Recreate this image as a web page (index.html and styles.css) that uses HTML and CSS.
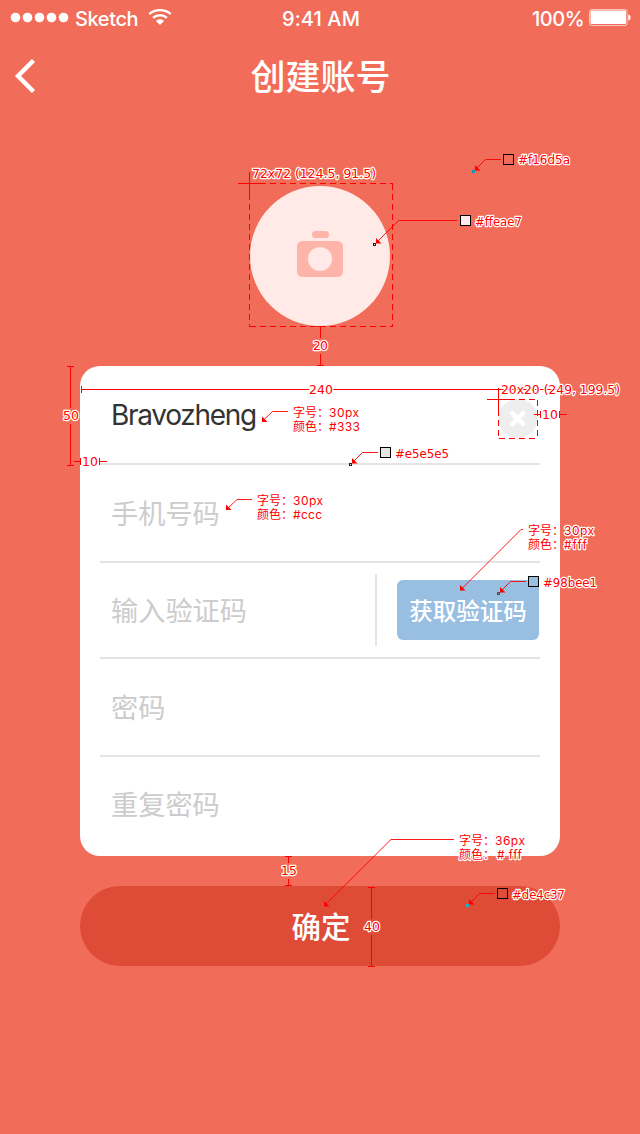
FILE: index.html
```html
<!DOCTYPE html>
<html lang="zh-CN">
<head>
<meta charset="utf-8">
<title>创建账号</title>
<link rel="stylesheet" href="styles.css">
</head>
<body>
<div class="screen">
  <div class="status">
    <div class="carrier">
      <svg width="60" height="12" viewBox="0 0 60 12" fill="#fff"><circle cx="5.5" cy="5.500" r="4.800"/><circle cx="17.500" cy="5.500" r="4.800"/><circle cx="29.500" cy="5.500" r="4.800"/><circle cx="41.500" cy="5.500" r="4.800"/><circle cx="53.500" cy="5.500" r="4.800"/></svg>
      <span class="name">Sketch</span>
      <svg class="wifi" width="24" height="18" viewBox="0 0 24 18" fill="none" stroke="#fff"><path stroke-width="2.4" d="M1.300 5.200C7-.2 17-.2 22.700 5.200M5.100 8.900c3.900-3.600 9.900-3.600 13.800 0"/><path fill="#fff" stroke="none" d="M7.900 12c2.400-2.300 5.800-2.300 8.200 0L12 16z"/></svg>
    </div>
    <span class="time">9:41 AM</span>
    <div class="power">
      <span class="percent">100%</span>
      <svg width="43" height="18" viewBox="0 0 43 18"><rect x=".5" y=".5" width="37.500" height="16" rx="2" fill="none" stroke="#fff" stroke-opacity=".6" stroke-width="1"/><rect x="1.500" y="1.500" width="35.500" height="13.500" rx="1" fill="#fff"/><path fill="#fff" d="M39.300 5.500c3 .3 3 5.700 0 6z"/></svg>
    </div>
  </div>
  <header class="nav">
    <svg class="back" width="24" height="36" viewBox="0 0 24 36" fill="none" stroke="#fff" stroke-width="4.400"><path d="M19.500 2.500 4 18l15.500 15.500"/></svg>
    <h1 class="title">创建账号</h1>
  </header>
  <div class="avatar">
    <svg width="46" height="46" viewBox="0 0 46 46"><rect x="15" y="0" width="17" height="7" rx="3.500" fill="#ffb4a9"/><rect y="10" width="46" height="36" rx="5.500" fill="#ffb4a9"/><circle cx="23" cy="28" r="12" fill="#ffeae7"/></svg>
  </div>
  <form class="card">
    <div class="row first"><span class="value">Bravozheng</span>
      <svg class="clear" width="40" height="40" viewBox="0 0 40 40"><circle cx="20" cy="19.500" r="19.700" fill="#eee"/><path d="m14.300 14.300 10.600 10.600m0-10.600L14.300 24.900" stroke="#fff" stroke-width="4.600" stroke-linecap="round"/></svg>
    </div>
    <div class="row"><span class="hint">手机号码</span></div>
    <div class="row short"><span class="hint">输入验证码</span><span class="divider"></span><button type="button" class="code">获取验证码</button></div>
    <div class="row"><span class="hint">密码</span></div>
    <div class="row last"><span class="hint">重复密码</span></div>
  </form>
  <button type="button" class="submit">确定</button>

  <svg class="notes" width="640" height="1134" viewBox="0 0 640 1134">
    <defs>
      <path id="head" class="head" d="M0 0h5.500L0-5.500z"/>
    </defs>
    <!-- dimension lines and outlines -->
    <g class="rule">
      <path class="dash" d="M249.500 183.500h143M392.500 183.500v143M249.500 183.500v143M249.500 326.500h143"/>
      <path d="M238 183.500h25M249.500 172v26M320.500 326v12M320.500 354v11M317 326.500h7M317 365.500h7"/>
      <path d="M70.500 366v42M70.500 424v42M67 366.500h7M67 465.500h7"/>
      <path d="M74 461.500h6M80.500 458v7M99.500 458v7M100 461.500h7"/>
      <path d="M81.500 386v7M82 389.500h227M333 389.500h226"/>
      <path class="dash" d="M498.500 399.500h39M537.500 399.500v39M498.500 399.500v39M498.500 438.500h39"/>
      <path d="M487 399.500h25M498.500 388v26M534 414.500h6M540.500 411v7M559.500 411v7M560 414.500h7"/>
      <path d="M288.500 856v7M288.500 879v7M285 856.500h7M285 885.500h7"/>
      <path d="M371.500 887v32M371.500 935v32M368 887.500h7M368 966.500h7"/>
    </g>
    <!-- callout leaders -->
    <g class="leader">
      <path d="M501 159.500h-15.500L475 170"/><use href="#head" x="475" y="170.500"/>
      <path d="M457 220.500h-58.500L376 243"/><use href="#head" x="376" y="243.500"/>
      <path d="M288 411.500h-15.500L262 421.500"/><use href="#head" x="262" y="422"/>
      <path d="M378 452.500h-15.500L352 463"/><use href="#head" x="352" y="463.500"/>
      <path d="M252 499.500h-15L226 510"/><use href="#head" x="226" y="510"/>
      <path d="M523 529.500h-2L460.500 590"/><use href="#head" x="460" y="590.500"/>
      <path d="M526 581.500h-15.500L500 592"/><use href="#head" x="500" y="592.500"/>
      <path d="M454 839.500h-63L324 906"/><use href="#head" x="324" y="906.500"/>
      <path d="M495 893.500h-15.500L469 904"/><use href="#head" x="469" y="904.500"/>
    </g>
    <g class="swatch">
      <rect x="503.500" y="154.500" width="10" height="10" fill="#f16d5a"/>
      <rect x="460.500" y="215.500" width="10" height="10" fill="#ffeae7"/>
      <rect x="380.500" y="447.500" width="10" height="10" fill="#e5e5e5"/>
      <rect x="528.500" y="576.500" width="10" height="10" fill="#98bee1"/>
      <rect x="497.500" y="888.500" width="10" height="10" fill="#de4c37"/>
    </g>
    <g class="pick">
      <rect x="472.500" y="170.500" width="2" height="2" fill="#f16d5a" stroke="#0e92a5"/>
      <rect x="373.500" y="243.500" width="2" height="2" fill="#ffeae7" stroke="#222"/>
      <rect x="349.500" y="463.500" width="2" height="2" fill="#e5e5e5" stroke="#222"/>
      <rect x="497.500" y="592.500" width="2" height="2" fill="#98bee1" stroke="#67411e"/>
      <rect x="466.500" y="904.500" width="2" height="2" fill="#de4c37" stroke="#21b3c8"/>
    </g>
    <g class="label">
      <text x="252" y="178" textLength="124" lengthAdjust="spacingAndGlyphs">72x72 (124.5, 91.5)</text>
      <text x="518" y="164" textLength="52" lengthAdjust="spacingAndGlyphs">#f16d5a</text>
      <text x="475" y="226" textLength="47" lengthAdjust="spacingAndGlyphs">#ffeae7</text>
      <text x="313" y="350" textLength="15">20</text>
      <text x="63" y="420" textLength="16">50</text>
      <text x="82" y="466" textLength="16">10</text>
      <text x="309" y="394" textLength="24">240</text>
      <text x="501" y="394" textLength="119" lengthAdjust="spacingAndGlyphs">20x20 (249, 199.5)</text>
      <text x="542" y="419" textLength="16">10</text>
      <text x="395" y="458" textLength="54" lengthAdjust="spacingAndGlyphs">#e5e5e5</text>
      <text x="543" y="587" textLength="54" lengthAdjust="spacingAndGlyphs">#98bee1</text>
      <text x="281" y="875" textLength="16">15</text>
      <text x="364" y="931" textLength="16">40</text>
      <text x="512" y="899" textLength="53" lengthAdjust="spacingAndGlyphs">#de4c37</text>
    </g>
    <g class="label spec">
      <text x="293" y="417">字号：</text><text x="329" y="417" textLength="30">30px</text>
      <text x="293" y="431">颜色：</text><text x="329" y="431" textLength="31">#333</text>
      <text x="257" y="505">字号：</text><text x="293" y="505" textLength="30">30px</text>
      <text x="257" y="519">颜色：</text><text x="293" y="519" textLength="29">#ccc</text>
      <text x="528" y="535">字号：</text><text x="564" y="535" textLength="30">30px</text>
      <text x="528" y="549">颜色：</text><text x="564" y="549" textLength="23">#fff</text>
      <text x="459" y="845">字号：</text><text x="495" y="845" textLength="30">36px</text>
      <text x="459" y="859">颜色：</text><text x="497" y="859" textLength="25"># fff</text>
    </g>
  </svg>
</div>
</body>
</html>
```
FILE: styles.css
```css
* { box-sizing: border-box; }
body { margin: 0; }
.screen {
  position: relative;
  width: 640px;
  height: 1134px;
  overflow: hidden;
  background: #f16d5a;
  color: #fff;
  display: flex;
  flex-direction: column;
  align-items: center;
  font-family: Inter, "Noto Sans CJK SC", sans-serif;
}
svg { display: block; flex: none; }
button { border: 0; padding: 0; color: #fff; font-family: inherit; }

.status {
  width: 100%;
  height: 36px;
  padding: 0 8px 0 10px;
  display: grid;
  grid-template-columns: 1fr auto 1fr;
  align-items: center;
  font-size: 20px;
  line-height: 34px;
}
.carrier, .power { display: flex; align-items: center; }
.carrier { gap: 5px; }
.name, .time, .percent { padding-top: 2px; font-weight: 500; }
.name { letter-spacing: -0.4px; }
.wifi { margin-left: 5px; }
.power { justify-content: flex-end; gap: 5px; }
.time { letter-spacing: 0.1px; }
.percent { letter-spacing: -0.5px; }

.nav {
  width: 100%;
  height: 80px;
  padding: 0 14px;
  display: grid;
  grid-template-columns: 24px 1fr 24px;
  align-items: center;
}
.title {
  margin: 0;
  padding: 1px 0 0 1px;
  text-align: center;
  font-size: 35px;
  font-weight: 500;
  line-height: 50px;
}

.avatar {
  width: 140px;
  height: 140px;
  margin-top: 70px;
  border-radius: 50%;
  background: #ffeae7;
  display: flex;
  align-items: center;
  justify-content: center;
}
.avatar svg { margin-top: -4px; }

.card {
  width: 480px;
  height: 490px;
  margin: 40px 0 30px;
  padding: 0 20px;
  border-radius: 20px;
  background: #fff;
}
.row {
  height: 98px;
  padding: 0 1px 0 11px;
  border-bottom: 2px solid #e5e5e5;
  display: flex;
  align-items: center;
}
.row.first { height: 99px; padding-right: 2px; }
.row.short { height: 96px; }
.row.last { height: 99px; border-bottom: 0; }
.value {
  flex: 1;
  color: #333;
  font-size: 28px;
  line-height: 40px;
  letter-spacing: -1.3px;
}
.clear { margin-top: 8px; }
.hint {
  flex: 1;
  padding-top: 3px;
  color: #ccc;
  font-size: 27.2px;
  line-height: 40px;
}
.last .hint { padding: 0 0 2px; }
.divider { width: 2px; height: 72px; margin-right: 20px; background: #e5e5e5; }
.code {
  width: 142px;
  height: 60px;
  padding-bottom: 1px;
  border-radius: 6px;
  background: #98bee1;
  font-size: 23.5px;
  font-weight: 500;
}
.submit {
  width: 480px;
  height: 80px;
  padding: 0 0 3px 2px;
  border-radius: 40px;
  background: #de4c37;
  font-size: 29.5px;
  font-weight: 500;
}

.notes { position: absolute; left: 0; top: 0; }
.rule { fill: none; stroke: #f00; shape-rendering: crispEdges; }
.dash { stroke-dasharray: 6 4; }
.leader { fill: none; stroke: #f00; stroke-width: .9; }
.head { fill: #f00; stroke: none; }
.swatch { stroke: #000; shape-rendering: crispEdges; }
.pick { shape-rendering: crispEdges; }
.label {
  fill: #f00;
  stroke: #fff;
  stroke-width: 2.4px;
  stroke-linejoin: round;
  paint-order: stroke;
  font: 12.5px "DejaVu Sans", sans-serif;
}
.label text { white-space: pre; }
.spec { font: 12px Inter, "Noto Sans CJK SC", sans-serif; }
```
